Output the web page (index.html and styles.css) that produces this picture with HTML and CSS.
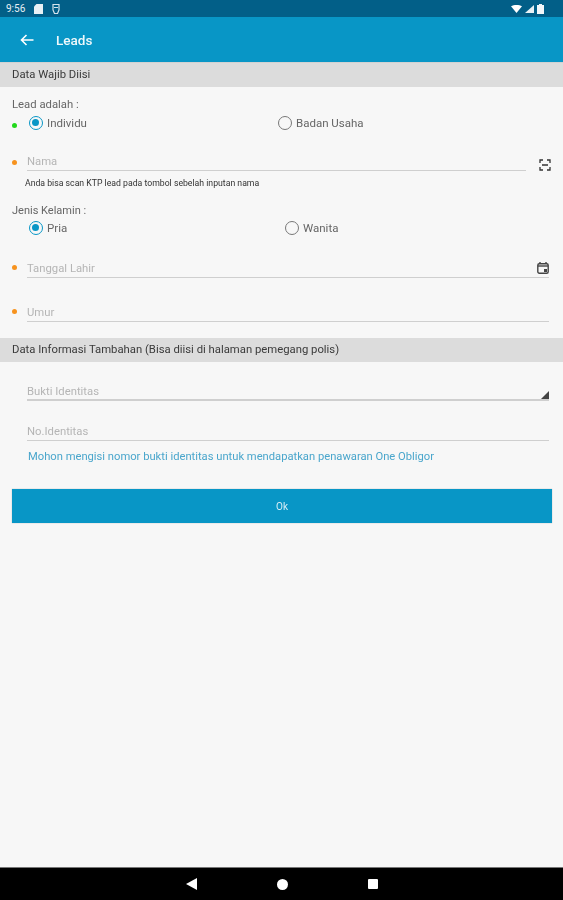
FILE: index.html
```html
<!DOCTYPE html>
<html lang="en">

<head>
    <meta charset="UTF-8">
    <meta name="viewport" content="width=device-width, initial-scale=1.0">
    <title>Leads</title>
    <link rel="stylesheet" href="styles.css">
</head>

<body>
    <div class="screen">
        <div class="status-bar">
            <div class="status-left">
                <span class="clock">9:56</span>
                <svg class="status-icon" width="9" height="10" viewBox="0 0 9 10"><path d="M2.500 0H9v10H0V2.500z" fill="#e8f1f5"/></svg>
                <svg class="status-icon" width="8" height="10" viewBox="0 0 8 10"><path d="M1 .5h6v5.500L5.500 9.500h-3L1 6z" fill="none" stroke="#d5e4ec" stroke-width="1.200"/><path d="M2 3.500h4" stroke="#d5e4ec"/></svg>
            </div>
            <div class="status-right">
                <svg width="11" height="8" viewBox="0 0 11 8"><path d="M0 1.200C3-.4 8-.4 11 1.200L5.500 8z" fill="#fff"/></svg>
                <svg width="9" height="8" viewBox="0 0 9 8"><path d="M9 0v8H0z" fill="#e8f1f5"/></svg>
                <svg width="7" height="10" viewBox="0 0 7 10"><path d="M2 0h3v1h2v9H0V1h2z" fill="#f2f7fa"/></svg>
            </div>
        </div>

        <div class="toolbar">
            <svg class="back" width="14" height="12" viewBox="0 0 14 12"><path d="M13.500 6H1.500M6.500 1l-5 5 5 5" fill="none" stroke="#fff" stroke-width="1.600"/></svg>
            <span class="toolbar-title">Leads</span>
        </div>

        <div class="content">
            <div class="section-head">Data Wajib Diisi</div>

            <div class="group-label first">Lead adalah :</div>
            <div class="radio-row">
                <span class="dot green"></span>
                <label class="radio-item"><span class="radio on"></span>Individu</label>
                <label class="radio-item"><span class="radio"></span>Badan Usaha</label>
            </div>

            <div class="field field-nama">
                <span class="dot orange"></span>
                <div class="input short">Nama</div>
                <svg class="scan-icon" width="12" height="12" viewBox="0 0 12 12"><path d="M1 4V1h3M8 1h3v3M11 8v3H8M4 11H1V8M3 6h6" fill="none" stroke="#333" stroke-width="1.300"/></svg>
            </div>
            <div class="hint">Anda bisa scan KTP lead pada tombol sebelah inputan nama</div>

            <div class="group-label gender-label">Jenis Kelamin :</div>
            <div class="radio-row gender">
                <span class="dot"></span>
                <label class="radio-item"><span class="radio on"></span>Pria</label>
                <label class="radio-item"><span class="radio"></span>Wanita</label>
            </div>

            <div class="field field-tgl">
                <span class="dot orange"></span>
                <div class="input">Tanggal Lahir</div>
                <svg class="calendar-icon" width="12" height="12" viewBox="0 0 12 12"><path d="M3 0v2M9 0v2" stroke="#444" stroke-width="1.400"/><rect x=".8" y="1.800" width="10.400" height="9.400" rx="1.500" fill="none" stroke="#444" stroke-width="1.400"/><path d="M1 4h10" stroke="#444" stroke-width="1.400"/><rect x="7" y="7" width="3" height="3" fill="#444"/></svg>
            </div>

            <div class="field field-umur">
                <span class="dot orange"></span>
                <div class="input">Umur</div>
            </div>

            <div class="section-head second-head">Data Informasi Tambahan (Bisa diisi di halaman pemegang polis)</div>

            <div class="field field-bukti">
                <span class="dot"></span>
                <div class="input thick">Bukti Identitas</div>
                <span class="spinner-arrow"></span>
            </div>

            <div class="field field-no">
                <span class="dot"></span>
                <div class="input">No.Identitas</div>
            </div>

            <div class="note">Mohon mengisi nomor bukti identitas untuk mendapatkan penawaran One Obligor</div>

            <button class="ok-btn">Ok</button>
        </div>

        <div class="nav-bar">
            <svg width="11" height="12" viewBox="0 0 11 12"><path d="M11 0v12L0 6z" fill="#fff"/></svg>
            <svg width="11" height="11" viewBox="0 0 11 11"><circle cx="5.500" cy="5.500" r="5.500" fill="#fff"/></svg>
            <svg width="10" height="10" viewBox="0 0 10 10"><rect width="10" height="10" rx="1" fill="#fff"/></svg>
        </div>
    </div>
</body>

</html>
```

FILE: styles.css
```css
body {
    margin: 0;
    font-family: Roboto, "Liberation Sans", sans-serif;
    background-color: #f7f7f7;
}

.screen {
    display: flex;
    flex-direction: column;
    width: 563px;
    height: 900px;
    overflow: hidden;
    filter: blur(0.4px);
}

.status-bar {
    display: flex;
    align-items: center;
    justify-content: space-between;
    height: 17px;
    padding: 0 19px 0 6px;
    background-color: #025f88;
}

.status-left,
.status-right {
    display: flex;
    align-items: center;
}

.status-right {
    gap: 3px;
}

.clock {
    font-size: 10px;
    color: #e6eff4;
    margin-right: 9px;
}

.status-icon {
    margin-right: 9px;
}

.toolbar {
    display: flex;
    align-items: center;
    height: 45px;
    background-color: #0896c6;
    box-shadow: 0 1px 1px rgba(0, 0, 0, 0.15);
}

.back {
    margin-left: 20px;
}

.toolbar-title {
    margin-left: 22px;
    font-size: 13.500px;
    font-weight: 500;
    color: #eef8fb;
}

.content {
    flex: 1;
    display: flex;
    flex-direction: column;
    padding-top: 1px;
}

.section-head {
    height: 24px;
    line-height: 24px;
    padding-left: 12px;
    font-size: 11.300px;
    color: #3a3a3a;
    background-color: #dcdcdc;
}

.second-head {
    margin-top: 16px;
}

.group-label {
    height: 14px;
    line-height: 14px;
    padding-left: 12px;
    font-size: 11.300px;
    color: #666;
}

.group-label.first {
    margin-top: 11px;
}

.group-label.gender-label {
    margin-top: 15px;
    font-size: 11px;
}

.radio-row {
    display: flex;
    align-items: center;
    height: 18px;
    margin-top: 2px;
}

.radio-row.gender {
    margin-top: 1px;
}

.dot {
    flex: none;
    width: 5px;
    height: 5px;
    margin-left: 12px;
    border-radius: 50%;
}

.green {
    background-color: #22d81c;
    margin-top: 4px;
}

.orange {
    background-color: #f7931e;
    margin-top: -2px;
}

.radio-item {
    display: flex;
    align-items: center;
    font-size: 11.500px;
    color: #666;
}

.radio-item:nth-child(2) {
    width: 249px;
    margin-left: 12px;
}

.gender .radio-item:nth-child(2) {
    width: 256px;
}

.radio {
    box-sizing: border-box;
    flex: none;
    position: relative;
    width: 14px;
    height: 14px;
    margin-right: 4px;
    border: 1.500px solid #777;
    border-radius: 50%;
}

.radio.on {
    border-color: #0896c6;
}

.radio.on::after {
    content: "";
    position: absolute;
    top: 2px;
    left: 2px;
    width: 7px;
    height: 7px;
    border-radius: 50%;
    background-color: #0896c6;
}

.field {
    display: flex;
    align-items: center;
    position: relative;
    height: 20px;
}

.field .dot {
    margin-right: 10px;
}

.input {
    flex: 1;
    box-sizing: border-box;
    height: 20px;
    line-height: 21px;
    margin-right: 14px;
    font-size: 11.300px;
    color: #b5b5b5;
    border-bottom: 1.500px solid #cfcfcf;
}

.input.short {
    flex: none;
    width: 499px;
    margin-right: 13px;
}

.input.thick {
    border-bottom-width: 2px;
}

.field-nama {
    margin-top: 19px;
}

.field-nama .dot {
    margin-top: 2px;
}

.field-tgl {
    margin-top: 21px;
}

.field-umur {
    margin-top: 24px;
}

.field-bukti {
    margin-top: 19px;
}

.field-no {
    margin-top: 20px;
}

.scan-icon {
    flex: none;
    margin-top: 8px;
}

.calendar-icon {
    position: absolute;
    right: 14px;
    top: 4px;
}

.spinner-arrow {
    position: absolute;
    right: 14px;
    bottom: 2px;
    width: 0;
    height: 0;
    border-left: 8px solid transparent;
    border-bottom: 8px solid #444;
}

.hint {
    height: 12px;
    line-height: 12px;
    margin-top: 6px;
    padding-left: 25px;
    font-size: 8.700px;
    color: #333;
}

.note {
    height: 14px;
    line-height: 14px;
    margin-top: 9px;
    padding-left: 28px;
    font-size: 11.200px;
    color: #4aa6cc;
}

.ok-btn {
    height: 34px;
    margin: 25px 11px 0 12px;
    padding: 0;
    border: none;
    font-family: inherit;
    font-size: 10px;
    color: #d8eef6;
    background-color: #0896c6;
    box-shadow: 0 0 1px rgba(0, 0, 0, 0.3);
}

.nav-bar {
    display: flex;
    align-items: center;
    justify-content: center;
    gap: 80px;
    box-sizing: border-box;
    height: 33px;
    background-color: #000;
    border-top: 1px solid #777;
}
```
